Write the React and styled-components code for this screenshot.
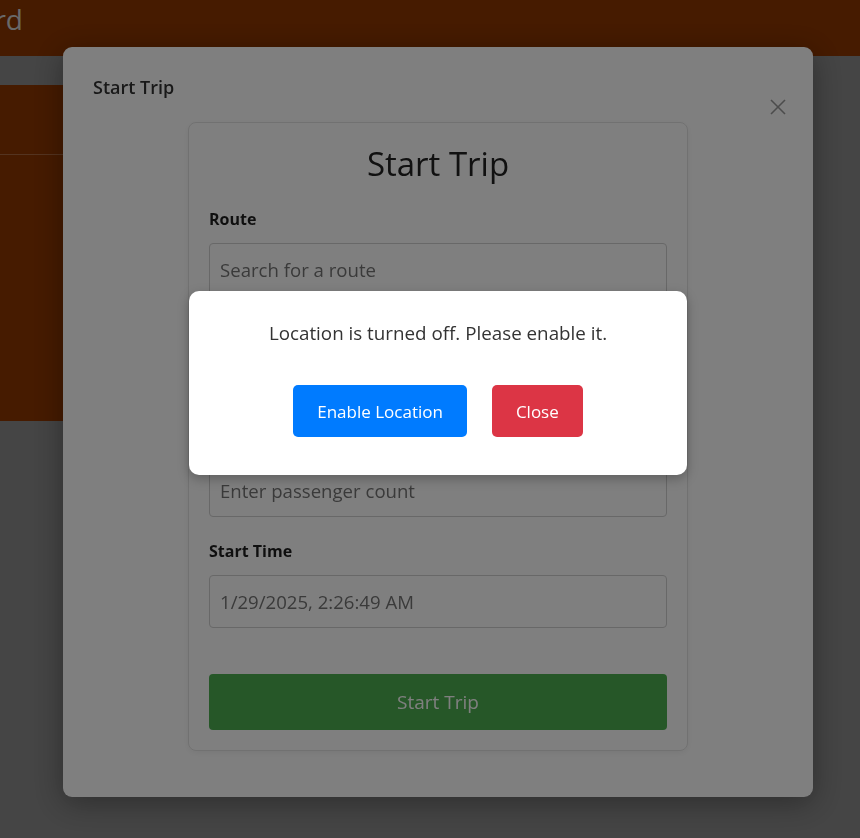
import React from 'react';
import styled, { createGlobalStyle } from 'styled-components';

const GlobalStyle = createGlobalStyle`
  * { box-sizing: border-box; }
  html, body {
    margin: 0;
    padding: 0;
    background: #8a8a8a;
    font-family: "Open Sans", "Noto Sans", Arial, sans-serif;
    overflow: hidden;
  }
`;

// ---- page behind the modal ----
const Page = styled.div`
  width: 860px;
  height: 838px;
  background: #8a8a8a;
`;

const Header = styled.header`
  height: 56px;
  background: #8c3600;
  display: flex;
  align-items: center;
`;

const TitleSlot = styled.div`
  width: 23px;
  display: flex;
  justify-content: flex-end;
  white-space: nowrap;
`;

const HeaderTitle = styled.h1`
  margin: 0 0 18px;
  font-size: 28px;
  font-weight: 400;
  color: #d2d2d2;
`;

const Content = styled.main`
  padding: 29px 80px 0 0;
`;

const TripCard = styled.section`
  background: #8c3600;
  height: 336px;
`;

const TripCardHead = styled.div`
  height: 70px;
  border-bottom: 1px solid rgba(255, 255, 255, 0.25);
`;

// ---- trip modal ----
const ModalLayer = styled.div`
  position: fixed;
  inset: 0;
  display: flex;
  justify-content: center;
  align-items: flex-start;
  padding: 47px 0 0 16px;
  z-index: 10;
`;

const Modal = styled.div`
  position: relative;
  width: 750px;
  background: #fff;
  border-radius: 9px;
  padding: 28px 30px 46px;
  box-shadow: 0 6px 30px rgba(0, 0, 0, 0.35);
`;

const ModalHeader = styled.div`
  height: 47px;
  display: flex;
  justify-content: space-between;
`;

const ModalTitle = styled.h3`
  margin: 0;
  font-size: 18px;
  font-weight: 600;
  line-height: 24px;
  color: #333;
`;

const CloseButton = styled.button`
  align-self: flex-end;
  margin: 0 -4px 6px 0;
  width: 18px;
  height: 18px;
  padding: 0;
  border: none;
  background: none;
  color: #999;
  display: flex;
  cursor: pointer;
`;

const FormCard = styled.form`
  position: relative;
  width: 500px;
  margin: 0 auto;
  padding: 22px 20px 20px;
  border: 1px solid #e2e2e2;
  border-radius: 8px;
  box-shadow: 0 2px 6px rgba(0, 0, 0, 0.06);
`;

const FormTitle = styled.h2`
  margin: 0 0 27px;
  text-align: center;
  font-size: 33px;
  font-weight: 500;
  line-height: 38px;
  color: #222;
`;

const Field = styled.div`
  margin-bottom: 24.5px;
`;

const Label = styled.label`
  display: block;
  margin-bottom: 14px;
  font-size: 16px;
  font-weight: 700;
  line-height: 19px;
  color: #1f1f1f;
`;

const Input = styled.input`
  display: block;
  width: 100%;
  height: 53px;
  padding: 0 10px;
  border: 1px solid #d0d0d0;
  border-radius: 4px;
  background: transparent;
  font-family: inherit;
  font-size: 18.6px;
  color: #757575;
  &::placeholder { color: #757575; }
`;

const SubmitButton = styled.button`
  display: block;
  width: 100%;
  height: 56px;
  margin-top: 46px;
  border: none;
  border-radius: 4px;
  background: #4caf50;
  color: #fff;
  font-family: inherit;
  font-size: 19px;
`;

// ---- location alert ----
const AlertBackdrop = styled.div`
  position: fixed;
  inset: 0;
  background: rgba(0, 0, 0, 0.5);
  z-index: 1;
`;

const AlertBox = styled.div`
  position: absolute;
  top: 168px;
  left: 0;
  right: 0;
  z-index: 2;
  background: #fff;
  border-radius: 10px;
  padding: 30px 20px 38px;
  box-shadow: 0 4px 12px rgba(0, 0, 0, 0.25);
  text-align: center;
`;

const AlertText = styled.p`
  margin: 0 0 40px;
  font-size: 18.8px;
  line-height: 24px;
  color: #333;
`;

const AlertActions = styled.div`
  display: flex;
  justify-content: center;
  gap: 25px;
`;

const AlertButton = styled.button`
  height: 52px;
  padding: 0 24px;
  border: none;
  border-radius: 5px;
  background: ${(p) => (p.$variant === 'danger' ? '#dc3545' : '#007bff')};
  color: #fff;
  font-family: inherit;
  font-size: 17px;
  cursor: pointer;
`;

const CloseIcon = () => (
  <svg width="18" height="18" viewBox="0 0 18 18" fill="none" stroke="currentColor" strokeWidth="1.6">
    <line x1="2" y1="2" x2="16" y2="16" />
    <line x1="16" y1="2" x2="2" y2="16" />
  </svg>
);

const App = () => {
  return (
    <>
      <GlobalStyle />
      <Page>
        <Header>
          <TitleSlot>
            <HeaderTitle>Driver Dashboard</HeaderTitle>
          </TitleSlot>
        </Header>
        <Content>
          <TripCard>
            <TripCardHead />
          </TripCard>
        </Content>
      </Page>

      <ModalLayer>
        <Modal>
          <ModalHeader>
            <ModalTitle>Start Trip</ModalTitle>
            <CloseButton type="button" aria-label="Close">
              <CloseIcon />
            </CloseButton>
          </ModalHeader>

          <FormCard onSubmit={(e) => e.preventDefault()}>
            <FormTitle>Start Trip</FormTitle>
            <Field>
              <Label>Route</Label>
              <Input placeholder="Search for a route" />
            </Field>
            <Field>
              <Label>Vehicle</Label>
              <Input placeholder="Select a vehicle" />
            </Field>
            <Field>
              <Label>Passenger Count</Label>
              <Input placeholder="Enter passenger count" />
            </Field>
            <Field>
              <Label>Start Time</Label>
              <Input readOnly value="1/29/2025, 2:26:49 AM" />
            </Field>
            <SubmitButton type="submit">Start Trip</SubmitButton>

            <AlertBackdrop />
            <AlertBox>
              <AlertText>Location is turned off. Please enable it.</AlertText>
              <AlertActions>
                <AlertButton type="button">Enable Location</AlertButton>
                <AlertButton type="button" $variant="danger">Close</AlertButton>
              </AlertActions>
            </AlertBox>
          </FormCard>
        </Modal>
      </ModalLayer>
    </>
  );
};

export default App;
